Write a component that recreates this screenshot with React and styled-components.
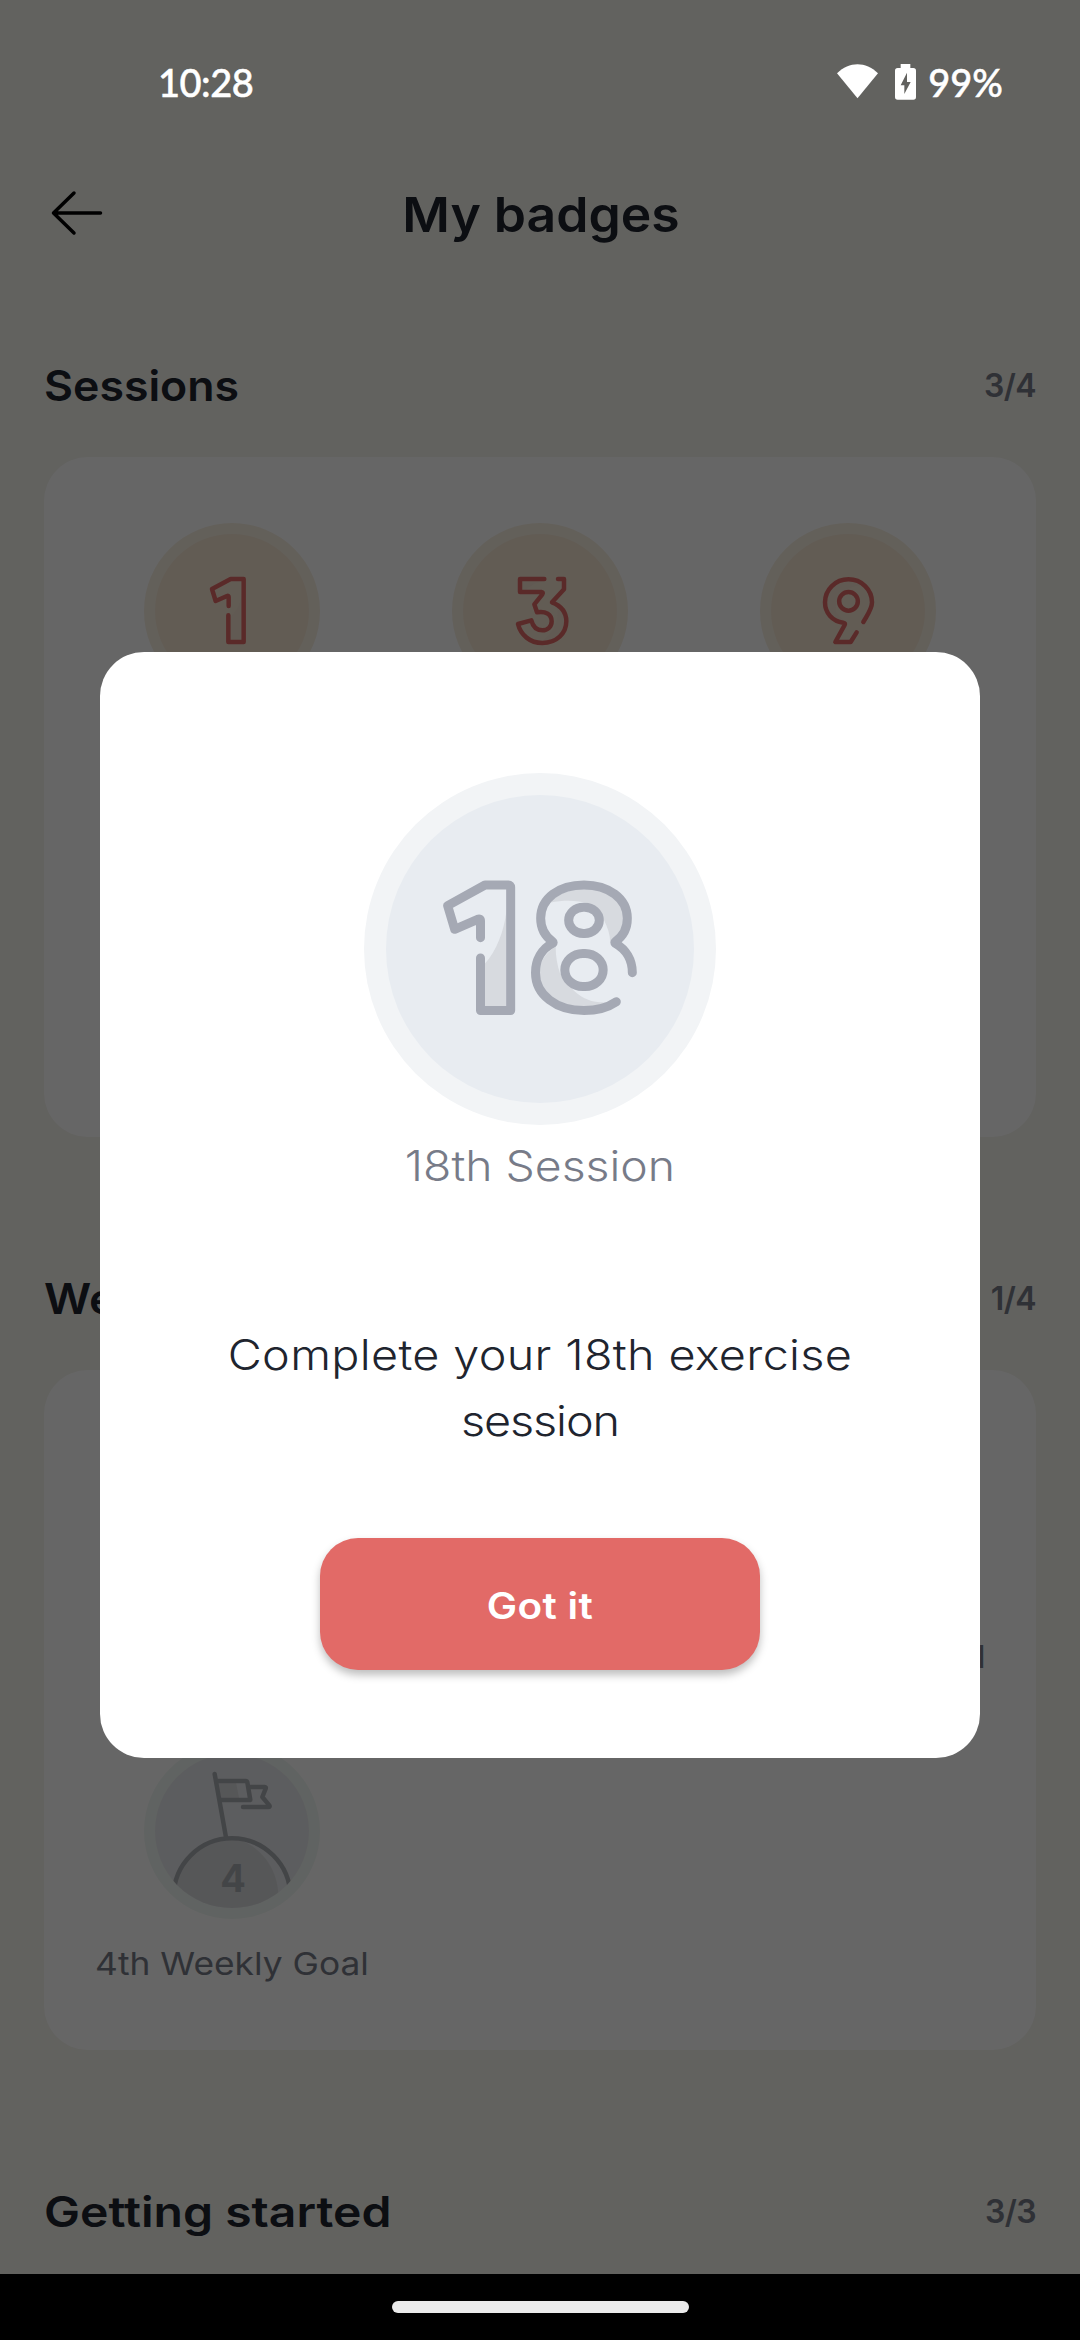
import React from "react";
import styled, { createGlobalStyle } from "styled-components";

const color = {
  page: "#f5f4ee",
  ink: "#20242e",
  muted: "#777b88",
  coral: "#e26a67",
};

const GlobalStyle = createGlobalStyle`
  *, *::before, *::after { box-sizing: border-box; }
  body {
    margin: 0;
    background: #000;
    font-family: Inter, "Liberation Sans", sans-serif;
    color: ${color.ink};
  }
`;

const Phone = styled.div`
  position: relative;
  width: 1080px;
  height: 2340px;
  display: flex;
  flex-direction: column;
  overflow: hidden;
  background: #000;
`;

const Page = styled.div`
  height: 2274px;
  overflow: hidden;
  background: ${color.page};
`;

const StatusBar = styled.div`
  position: relative;
  z-index: 2;
  height: 150px;
  padding: 14px 77px 0 158px;
  display: flex;
  align-items: center;
  justify-content: space-between;
  color: #fff;
  font-family: Lato, Inter, sans-serif;
  font-size: 38px;
  font-weight: 500;
  line-height: 60px;
  -webkit-text-stroke: 0.5px #fff;
`;

const Clock = styled.span`
  letter-spacing: -0.5px;
`;

const StatusIcons = styled.div`
  display: flex;
  align-items: center;
  gap: 12px;
`;

const Header = styled.header`
  height: 130px;
  padding: 0 44px;
  display: grid;
  grid-template-columns: 80px 1fr 80px;
  align-items: center;
`;

const BackButton = styled.button`
  display: flex;
  padding: 0 0 4px 6px;
  border: 0;
  background: none;
  color: #000;
`;

const PageTitle = styled.h1`
  margin: 0 -2px 0 0;
  text-align: center;
  font-size: 48.5px;
  line-height: 64px;
  font-weight: 570;
  transform: scaleX(1.065);
`;

const Main = styled.main`
  padding: 74px 44px 0;
  display: flex;
  flex-direction: column;
  gap: 130px;
`;

const SectionHead = styled.div`
  height: 64px;
  margin-bottom: 39px;
  display: flex;
  align-items: center;
  justify-content: space-between;
`;

const SectionTitle = styled.h2`
  margin: 0;
  font-size: 42.5px;
  line-height: 64px;
  font-weight: 580;
  white-space: nowrap;
  transform: scaleX(${(p) => p.$stretch});
  transform-origin: left center;
`;

const Count = styled.span`
  font-size: 32px;
  line-height: 64px;
  font-weight: 600;
  letter-spacing: -0.6px;
  color: ${color.muted};
`;

const Card = styled.div`
  height: 680px;
  padding: 66px 34px 0;
  border-radius: 44px;
  background: #fff;
  display: grid;
  grid-template-columns: repeat(3, 1fr);
  grid-auto-rows: 307px;
  align-content: start;
`;

const BadgeCell = styled.div`
  display: flex;
  flex-direction: column;
  align-items: center;
`;

const BadgeLabel = styled.span`
  margin-top: 23px;
  font-size: 31.5px;
  line-height: 44px;
  font-weight: 430;
  white-space: nowrap;
  color: ${color.muted};
  transform: scaleX(1.122);
`;

const BadgeArt = styled.svg`
  display: block;
  flex: none;
  width: ${(p) => p.$size}px;
  height: ${(p) => p.$size}px;
  fill: none;
  stroke-linecap: round;
  stroke-linejoin: round;
`;

const Overlay = styled.div`
  position: absolute;
  z-index: 1;
  inset: 0 0 66px;
  padding-top: 652px;
  display: flex;
  flex-direction: column;
  align-items: center;
  background: rgba(0, 0, 0, 0.6);
`;

const Dialog = styled.section`
  width: 880px;
  height: 1106px;
  padding-top: 121px;
  border-radius: 44px;
  background: #fff;
  display: flex;
  flex-direction: column;
  align-items: center;
`;

const DialogTitle = styled.h3`
  margin: 11px 0 0;
  font-size: 42.5px;
  line-height: 60px;
  font-weight: 300;
  color: ${color.muted};
  transform: scaleX(1.09);
`;

const DialogText = styled.p`
  width: 640px;
  margin: 126px 0 84px;
  text-align: center;
  font-size: 42.5px;
  line-height: 66px;
  font-weight: 300;
  letter-spacing: 0.3px;
  transform: scaleX(1.1);
`;

const LastLine = styled.span`
  display: block;
  letter-spacing: -1px;
`;

const ConfirmButton = styled.button`
  width: 440px;
  height: 132px;
  padding: 4px 0 0;
  border: 0;
  border-radius: 38px;
  background: ${color.coral};
  box-shadow: 0 5px 8px rgba(0, 0, 0, 0.26);
  color: #fff;
  font-family: inherit;
  font-size: 36.5px;
  font-weight: 600;
`;

const ConfirmLabel = styled.span`
  display: inline-block;
  letter-spacing: 0.3px;
  transform: scaleX(1.11);
`;

const NavBar = styled.div`
  height: 66px;
  display: flex;
  align-items: center;
  justify-content: center;
`;

const HomeHandle = styled.div`
  width: 297px;
  height: 12px;
  border-radius: 6px;
  background: #ebebeb;
`;

const tones = {
  earned: { rim: "#f8f0e2", face: "#f5e6d3", line: color.coral, shade: "#f1d9cb" },
  locked: { rim: "#f2f4f6", face: "#e8ecf1", line: "#a5a9b4", shade: "#d7dadf" },
  goal: { rim: "#f1f8f4", face: "#e7e9ed", line: "#a9acb2", shade: "#d8dadd" },
};

function Disc({ tone }) {
  return (
    <>
      <circle cx="264" cy="264" r="264" fill={tone.rim} />
      <circle cx="264" cy="264" r="231" fill={tone.face} />
    </>
  );
}

function FirstSessionBadge() {
  const t = tones.earned;
  return (
    <BadgeArt $size={176} viewBox="0 0 528 528" aria-label="1st session badge">
      <Disc tone={t} />
      <path d="M293 215C289 245 277 265 259 282V352H293Z" fill={t.shade} opacity=".5" />
      <path
        d="M254 249V222Q254 217 249 219L215 234L204 198L260 168H299V357H253V277"
        stroke={t.line}
        strokeWidth="13.5"
      />
    </BadgeArt>
  );
}

function ThirdSessionBadge() {
  const t = tones.earned;
  return (
    <BadgeArt $size={176} viewBox="0 0 528 528" aria-label="3rd session badge">
      <Disc tone={t} />
      <g transform="translate(144 111)">
        <path d="M78 90C95 72 115 66 133 64H66V90ZM171 138C180 180 160 220 127 243C165 243 193 220 193 184C193 160 185 147 171 138Z" fill={t.shade} opacity=".5" />
        <path
          d="M133 57H60V96H124Q131 97 127 103L103 133L111 157C137 152 155 164 155 184C155 200 143 211 127 211C110 211 99 202 94 181L54 192C62 225 90 249 127 249C170 249 199 220 199 184C199 155 182 137 156 127L192 88V57H174"
          stroke={t.line}
          strokeWidth="13.5"
        />
      </g>
    </BadgeArt>
  );
}

function NinthSessionBadge() {
  const t = tones.earned;
  return (
    <BadgeArt $size={176} viewBox="0 0 528 528" aria-label="9th session badge">
      <Disc tone={t} />
      <path d="M228 268C222 230 240 195 300 187C270 165 202 180 202 236C202 270 225 288 250 292Z" fill={t.shade} opacity=".5" />
      <circle cx="265.5" cy="235" r="28" fill={t.face} stroke={t.line} strokeWidth="13.5" />
      <path
        d="M310 297C324 273 336 258 336 238C336 200 305 169 265.5 169S195 200 195 238C195 270 217 295 250 299Q257 300 254 306L226 357H272L290 328"
        stroke={t.line}
        strokeWidth="13.5"
      />
    </BadgeArt>
  );
}

function EighteenthSessionBadge() {
  const t = tones.locked;
  return (
    <BadgeArt $size={352} viewBox="0 0 1056 1056" aria-label="18th session badge">
      <circle cx="528" cy="528" r="528" fill={t.rim} />
      <circle cx="528" cy="528" r="462" fill={t.face} />
      <g transform="translate(-42 -39)">
        <path d="M469 455C462 512 440 572 404 612V740H469Z" fill={t.shade} />
        <path
          d="M600 428C640 420 680 420 715 430L762 480C772 500 780 522 781 548C808 528 822 505 822 475C822 418 770 386 702 386C655 386 620 405 600 428Z"
          fill={t.shade}
        />
        <path
          d="M617 560C617 590 622 615 630 640L672 692C700 718 730 729 772 727C750 737 726 740 702 740C627 740 568 697 568 638C568 605 590 575 617 560Z"
          fill={t.shade}
        />
        <g stroke={t.line} strokeWidth="27">
          <path d="M391.500 533V483Q391.500 475 383 478L314 508L293 437L405 375H475Q482 375 482 382V751.500H391.500V594" />
          <rect x="656" y="441.500" width="92" height="79" rx="44" ry="39.500" fill={t.face} />
          <rect x="644.500" y="580.500" width="115" height="99" rx="54" ry="49.500" fill={t.face} />
          <path d="M847 638C847 600 828 568 796 550Q793 547 796 545C818 530 832 505 832 475C832 415 775 375 702 375C627 375 572 415 572 475C572 505 585 529 608 545Q611 547 608 550C575 567 556.500 600 556.500 638C556.500 705 620 751.500 702 751.500C740 751.500 774 742 799 725" />
        </g>
      </g>
    </BadgeArt>
  );
}

const GoalNumber = styled.text`
  font-family: Inter, sans-serif;
  font-size: 114px;
  font-weight: 700;
  text-anchor: middle;
`;

function WeeklyGoalBadge({ number }) {
  const t = tones.goal;
  const clipId = `goal-face-${number}`;
  return (
    <BadgeArt $size={176} viewBox="0 0 528 528" aria-label={`Weekly goal ${number} badge`}>
      <clipPath id={clipId}>
        <circle cx="264" cy="264" r="231" />
      </clipPath>
      <Disc tone={t} />
      <g clipPath={`url(#${clipId})`}>
        <path d="M92 528V440C95 350 165 288 264 286C310 290 395 340 403 450V528Z" fill={t.shade} />
        <circle cx="264" cy="461" r="175" stroke={t.line} strokeWidth="13.5" />
      </g>
      <path d="M221 118H276L286 168H231Z" fill={t.shade} />
      <g stroke={t.line} strokeWidth="13.5">
        <path d="M212 93L246 283" />
        <path d="M219 114H305Q309 114 310 118L319 171H231" />
        <path d="M318 132H362Q367 132 365 137L355 162L376 187Q379 192 373 192H297" />
      </g>
      <GoalNumber x="267" y="446" fill={t.line}>
        {number}
      </GoalNumber>
    </BadgeArt>
  );
}

function BackArrow() {
  return (
    <svg width="54" height="48" viewBox="0 0 54 48" fill="none" stroke="currentColor" strokeWidth="3.500" strokeLinecap="round" strokeLinejoin="round">
      <path d="M50.500 24H3.500M24 4L3.500 24L24 44" />
    </svg>
  );
}

function WifiAndBattery() {
  return (
    <svg width="79" height="36" viewBox="168 75 237 108">
      <path d="M229.500 178L168 103C205 67 254 67 291 103Z" fill="#fff" />
      <path
        fillRule="evenodd"
        fill="#fff"
        d="M359 75H388V87H397Q405 87 405 95V174Q405 182 397 182H350Q342 182 342 174V95Q342 87 350 87H359ZM378 101L359 139H370V165L389 129H378Z"
      />
    </svg>
  );
}

function Section({ title, count, stretch, children }) {
  return (
    <section>
      <SectionHead>
        <SectionTitle $stretch={stretch}>{title}</SectionTitle>
        <Count>{count}</Count>
      </SectionHead>
      <Card>{children}</Card>
    </section>
  );
}

export default function App() {
  return (
    <Phone>
      <GlobalStyle />
      <Page>
        <StatusBar>
          <Clock>10:28</Clock>
          <StatusIcons>
            <WifiAndBattery />
            <span>99%</span>
          </StatusIcons>
        </StatusBar>
        <Header>
          <BackButton aria-label="Back">
            <BackArrow />
          </BackButton>
          <PageTitle>My badges</PageTitle>
        </Header>
        <Main>
          <Section title="Sessions" count="3/4" stretch={1.05}>
            <BadgeCell>
              <FirstSessionBadge />
            </BadgeCell>
            <BadgeCell>
              <ThirdSessionBadge />
            </BadgeCell>
            <BadgeCell>
              <NinthSessionBadge />
            </BadgeCell>
          </Section>
          <Section title="Weekly" count="1/4" stretch={1.09}>
            <BadgeCell />
            <BadgeCell />
            <BadgeCell>
              <WeeklyGoalBadge number={3} />
              <BadgeLabel>3rd Weekly Goal</BadgeLabel>
            </BadgeCell>
            <BadgeCell>
              <WeeklyGoalBadge number={4} />
              <BadgeLabel>4th Weekly Goal</BadgeLabel>
            </BadgeCell>
          </Section>
          <Section title="Getting started" count="3/3" stretch={1.132} />
        </Main>
      </Page>
      <Overlay>
        <Dialog role="dialog" aria-modal="true">
          <EighteenthSessionBadge />
          <DialogTitle>18th Session</DialogTitle>
          <DialogText>
            Complete your 18th exercise <LastLine>session</LastLine>
          </DialogText>
          <ConfirmButton>
            <ConfirmLabel>Got it</ConfirmLabel>
          </ConfirmButton>
        </Dialog>
      </Overlay>
      <NavBar>
        <HomeHandle />
      </NavBar>
    </Phone>
  );
}
